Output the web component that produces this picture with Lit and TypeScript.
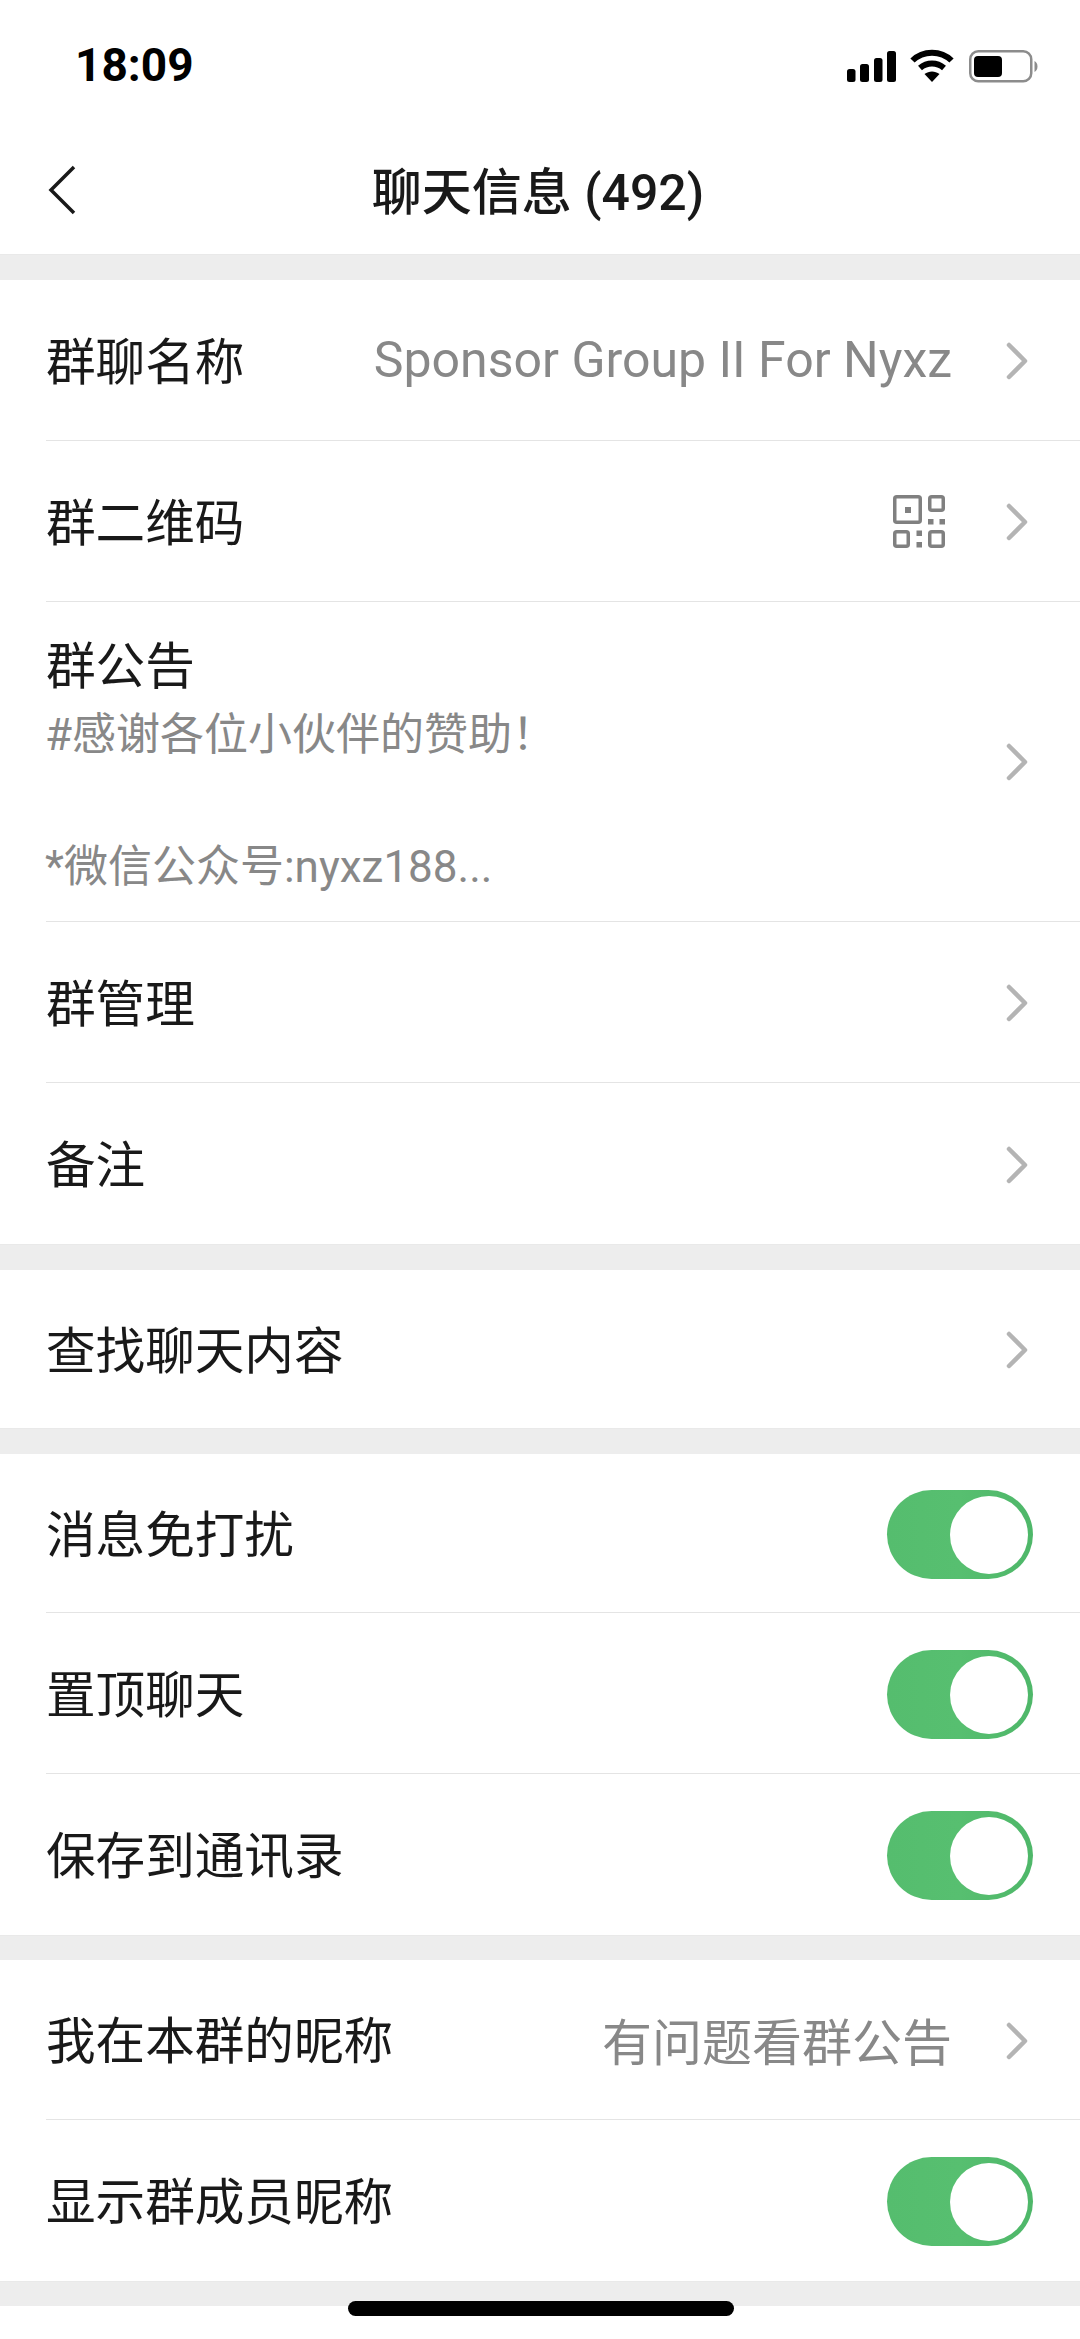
import { LitElement, html, css } from "lit";
import { customElement } from "lit/decorators.js";

const chev = html`<svg class="chev" viewBox="0 0 24 40" width="24" height="40"><path d="M4 4 L20 20 L4 36" fill="none" stroke="#b4b4b4" stroke-width="4.5" stroke-linecap="round" stroke-linejoin="round"/></svg>`;
const sw = html`<div class="sw"><div class="knob"></div></div>`;
const qr = html`<svg class="qr" viewBox="0 0 52 53" width="52" height="53">
  <g fill="none" stroke="#808080" stroke-width="3.5">
    <rect x="1.75" y="1.75" width="25.5" height="25.5" rx="2"/>
    <rect x="36.75" y="1.75" width="13.5" height="13.5" rx="2"/>
    <rect x="1.75" y="36.75" width="13.5" height="14.5" rx="2"/>
    <rect x="36.75" y="36.75" width="13.5" height="14.5" rx="2"/>
  </g>
  <g fill="#808080">
    <rect x="12" y="12" width="6" height="6"/>
    <rect x="35" y="24" width="5.500" height="5.500"/>
    <rect x="46.500" y="24" width="5.500" height="5.500"/>
    <rect x="23.500" y="35.500" width="5.500" height="5.500"/>
    <rect x="23.500" y="47" width="5.500" height="5.500"/>
  </g>
</svg>`;

@customElement("app-root")
export class AppRoot extends LitElement {
  static styles = css`
    :host { display: block; width: 1080px; height: 2339px; background: #fff; overflow: hidden; position: relative;
      font-family: Roboto, "Noto Sans CJK SC", sans-serif; color: #191919; }
    .status { height: 130px; display: flex; justify-content: space-between; align-items: center; padding: 0 41px 0 75px; box-sizing: border-box; }
    .time { font-size: 46px; font-weight: 700; color: #000; }
    .icons { display: flex; align-items: center; margin-top: 2px; }
    .signal { margin-right: 14px; }
    .wifi { margin-right: 15px; }
    .nav { height: 124px; position: relative; display: flex; align-items: center; justify-content: center; }
    .back { position: absolute; left: 47px; top: 35px; }
    .title { font-size: 50px; font-weight: 500; margin-top: -9px; margin-right: 4px; white-space: pre; }
    .gap { height: 26px; background: #ededed; box-shadow: inset 0 1px 0 #e9e9e9; }
    .gap.s { height: 25px; }
    .group { background: #fff; }
    .row { height: 161px; margin-left: 46px; padding-right: 47px; display: flex; align-items: center; box-sizing: border-box; border-bottom: 1px solid #e4e4e4; }
    .row.last { border-bottom: none; }
    .row.find { height: 158px; }
    .row.first { height: 159px; }
    .row.mid { height: 160px; }
    .label { font-size: 49.6px; flex: 1; white-space: nowrap; padding-bottom: 5px; }
    .value { font-size: 50px; color: #888; white-space: nowrap; margin-right: 53px; padding-bottom: 1px; }
    .qr { margin-right: 60px; }
    .chev { flex: none; margin-right: 4px; margin-top: 2px; }
    .sw { width: 146px; height: 89px; border-radius: 45px; background: linear-gradient(90deg, #55bd6e, #57bf70 50%, #4eb769); position: relative; margin-top: 2px; }
    .knob { position: absolute; right: 5px; top: 6px; width: 78px; height: 78px; border-radius: 50%; background: #fff; }
    .notice { height: 320px; margin-left: 46px; padding-right: 47px; box-sizing: border-box; border-bottom: 1px solid #e4e4e4; display: flex; align-items: center; }
    .ntext { flex: 1; display: flex; flex-direction: column; align-self: stretch; padding-top: 35px; }
    .nlabel { font-size: 49.6px; line-height: 60px; }
    .nsub { font-size: 44px; line-height: 56px; color: #888; white-space: nowrap; margin-left: -1px; }
    .nsub.a { margin-top: 10px; }
    .nsub.b { margin-top: 76px; }
    .notice .chev { margin-top: 0; }
    .home { position: absolute; left: 348px; top: 2301px; width: 386px; height: 15px; border-radius: 8px; background: #000; }
  `;

  row(label: string, opts: { value?: string; qr?: boolean; toggle?: boolean; cls?: string } = {}) {
    return html`<div class="row ${opts.cls ?? ""}">
      <div class="label">${label}</div>
      ${opts.value ? html`<div class="value">${opts.value}</div>` : ""}
      ${opts.qr ? qr : ""}
      ${opts.toggle ? sw : chev}
    </div>`;
  }

  render() {
    return html`
      <div class="status">
        <div class="time">18:09</div>
        <div class="icons">
          <svg class="signal" width="49" height="34" viewBox="0 0 49 34">
            <rect x="0" y="20" width="8.500" height="13" rx="2.500"/><rect x="13" y="15" width="9" height="18" rx="2.500"/>
            <rect x="27" y="9" width="8.500" height="24" rx="2.500"/><rect x="40" y="2" width="9" height="31" rx="2.500"/>
          </svg>
          <svg class="wifi" width="44" height="34" viewBox="0 0 44 34">
            <path d="M2.500 11.500 C13 1 31 1 41.500 11.500" fill="none" stroke="#000" stroke-width="6"/>
            <path d="M10 19 C17 13 27 13 34 19" fill="none" stroke="#000" stroke-width="6"/>
            <path d="M22 33 L14.500 25 C19 21.500 25 21.500 29.500 25 Z" fill="#000"/>
          </svg>
          <svg width="70" height="34" viewBox="0 0 70 34">
            <rect x="1.250" y="2.250" width="61" height="30" rx="8" fill="none" stroke="#8c8c8c" stroke-width="2.500"/>
            <rect x="5" y="7" width="28" height="21" rx="4" fill="#000"/>
            <path d="M65.500 12 C69.500 14 69.500 21 65.500 23 Z" fill="#8c8c8c"/>
          </svg>
        </div>
      </div>
      <div class="nav">
        <svg class="back" width="32" height="50" viewBox="0 0 32 50"><path d="M27 2 L4 25 L27 48" fill="none" stroke="#191919" stroke-width="3.500"/></svg>
        <div class="title">聊天信息 (492)</div>
      </div>
      <div class="gap"></div>
      <div class="group">
        ${this.row("群聊名称", { value: "Sponsor Group II For Nyxz" })}
        ${this.row("群二维码", { qr: true })}
        <div class="notice">
          <div class="ntext">
            <div class="nlabel">群公告</div>
            <div class="nsub a">#感谢各位小伙伴的赞助！</div>
            <div class="nsub b">*微信公众号:nyxz188...</div>
          </div>
          ${chev}
        </div>
        ${this.row("群管理")}
        ${this.row("备注", { cls: "last" })}
      </div>
      <div class="gap"></div>
      <div class="group">${this.row("查找聊天内容", { cls: "last find" })}</div>
      <div class="gap"></div>
      <div class="group">
        ${this.row("消息免打扰", { toggle: true, cls: "first" })}
        ${this.row("置顶聊天", { toggle: true })}
        ${this.row("保存到通讯录", { toggle: true, cls: "last" })}
      </div>
      <div class="gap s"></div>
      <div class="group">
        ${this.row("我在本群的昵称", { value: "有问题看群公告", cls: "mid" })}
        ${this.row("显示群成员昵称", { toggle: true, cls: "last" })}
      </div>
      <div class="gap s"></div>
      <div class="home"></div>
    `;
  }
}
